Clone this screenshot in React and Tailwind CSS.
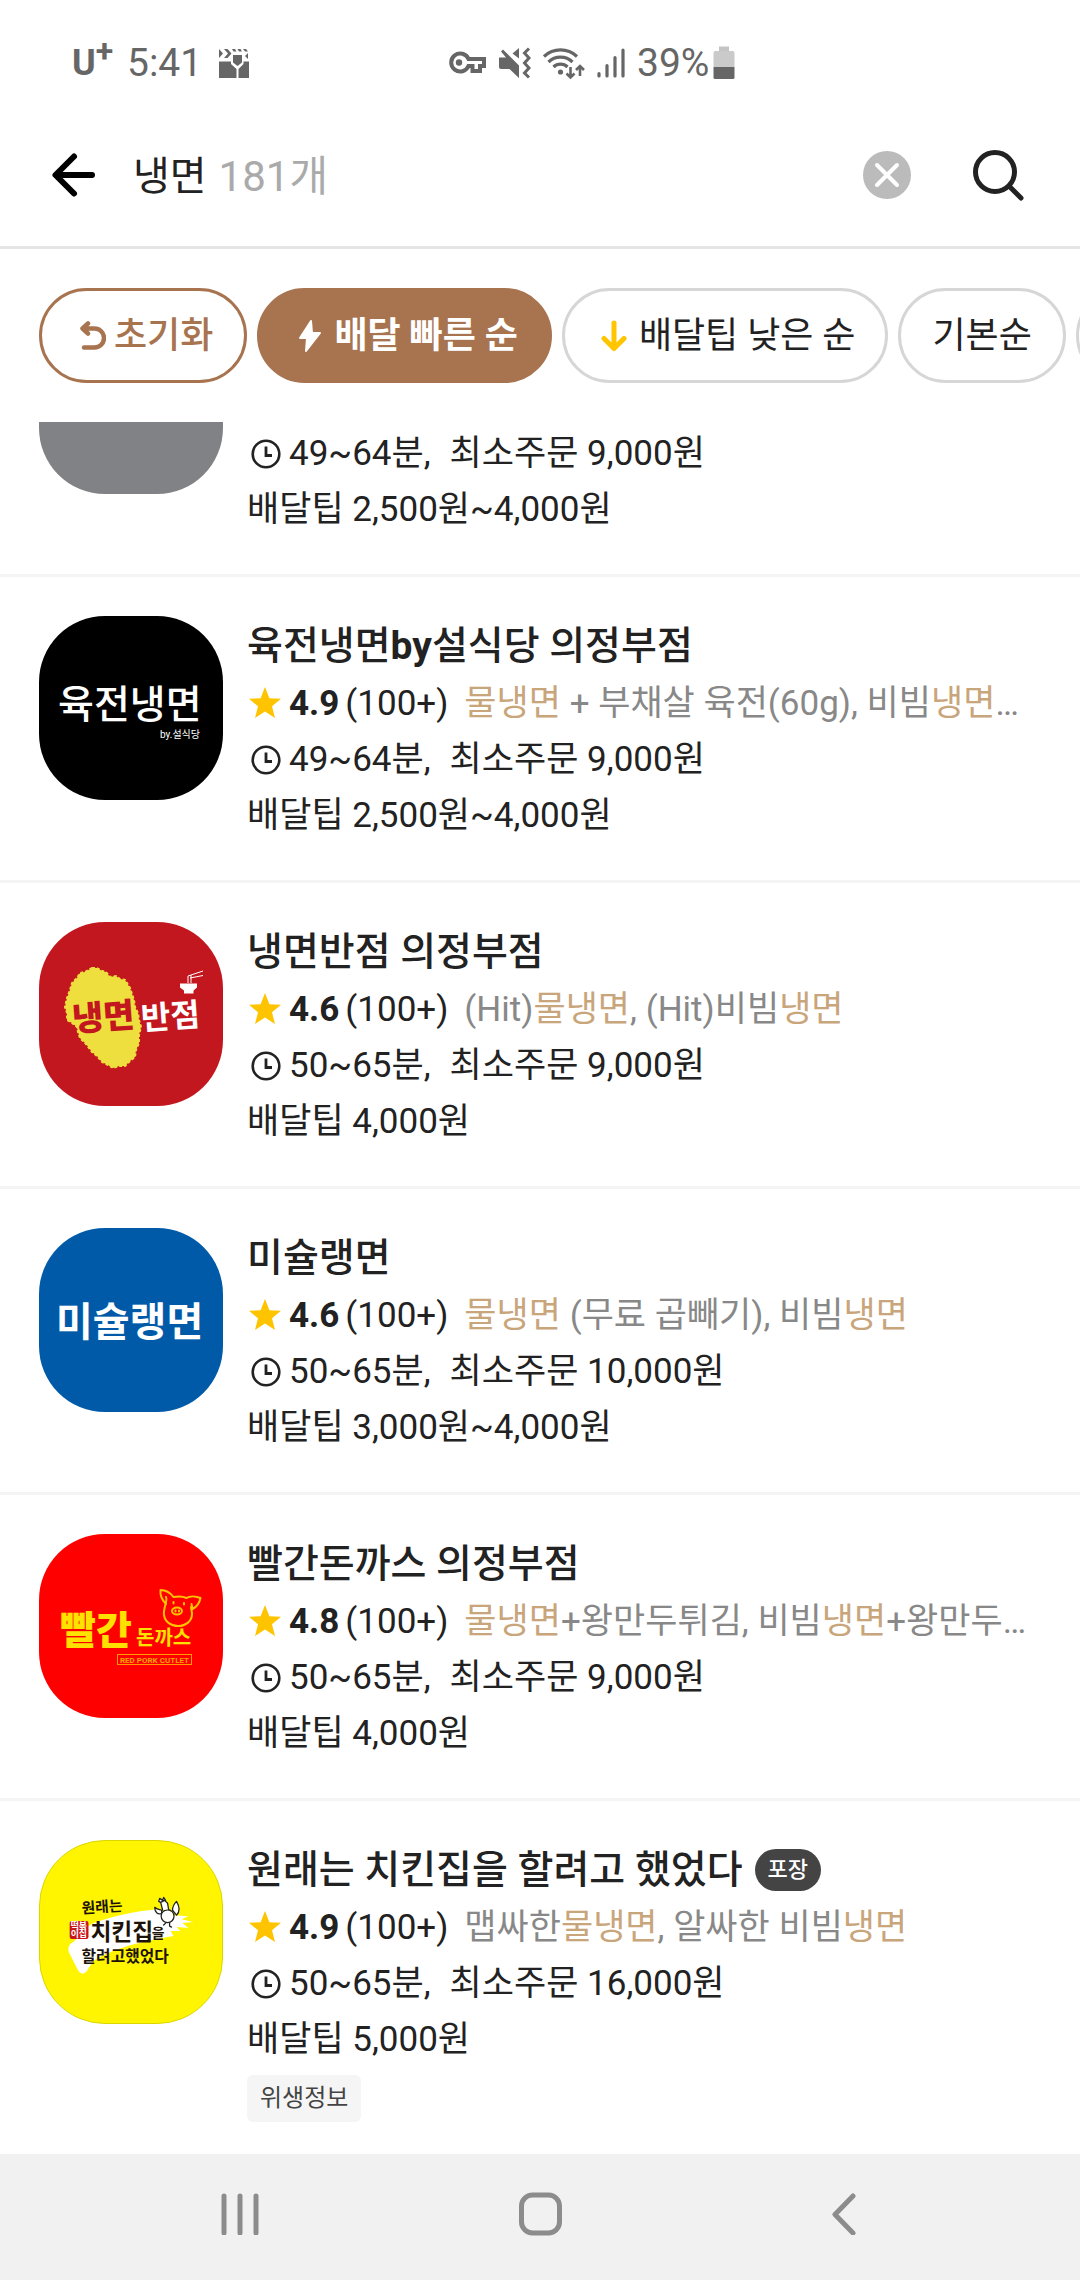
import React, { useState } from "react";

const KO = "font-['Roboto','Noto_Sans_CJK_KR',sans-serif]";

/* ---------- status bar icons ---------- */

function ClapperIcon() {
  return (
    <svg width="30" height="30" viewBox="0 0 30 30" fill="#666">
      <path d="M0 1l4 4.500L0 10zM5 1h3.500l4 4.500-4 4.500H5l4-4.500z" />
      <path d="M13 1h3l1.500 2.500h-3zM18.500 1h3L23 3.500h-3zM24 1h3l2 2.500h-3zM29 5v6l-3-3z" />
      <path d="M14 7h9v7.500L18.500 18 14 14.500z" />
      <path d="M0 13.500h12v2.500l5.500 5v9H0zM30 13.500h-5.500V16l-5 5v9H30z" />
    </svg>
  );
}

function KeyIcon() {
  return (
    <svg width="39" height="24" viewBox="0 0 39 24" fill="none" stroke="#666" strokeWidth="4">
      <path d="M20.500 8A9 9 0 1 0 20.500 15H24.500V20H32V15H36V8Z" strokeLinejoin="miter" />
      <circle cx="11" cy="11.500" r="3.200" fill="#666" stroke="none" />
    </svg>
  );
}

function MuteIcon() {
  return (
    <svg width="32" height="32" viewBox="0 0 32 32">
      <path d="M0 10.500h7L2 4.500l2-2L20 18.500V31l-9.500-9H2a2 2 0 0 1-2-2zM20 1v10.500L13.500 6.500z" fill="#666" />
      <path d="M30 1.500l-4.500 4.500L30 11l-4.500 5 4.500 5-4.500 5 4.500 4.500" fill="none" stroke="#666" strokeWidth="3" />
    </svg>
  );
}

function WifiIcon() {
  return (
    <svg width="42" height="33" viewBox="0 0 42 33" fill="none" stroke="#666" strokeWidth="3.200">
      <path d="M1 9.500a24 24 0 0 1 33 0M5.500 15a17 17 0 0 1 24 0M10.500 20a10 10 0 0 1 14 0" />
      <circle cx="17.500" cy="25" r="2.600" fill="#666" stroke="none" />
      <path d="M27.500 20v10M23.500 26.500l4 4 4-4M37 29V19.500M33 23l4-4 4 4" strokeWidth="2.600" />
    </svg>
  );
}

function SignalIcon() {
  return (
    <svg width="28" height="30" viewBox="0 0 28 30" stroke="#666" strokeWidth="3.200" strokeLinecap="round">
      <path d="M2 25.500v2.500M10 17.500V28M18 9.500V28M26 2v26" />
    </svg>
  );
}

function BatteryIcon() {
  return (
    <svg width="22" height="34" viewBox="0 0 22 34">
      <path d="M6 0.500h10V6H6z" fill="#c4c4c4" />
      <path d="M0.500 7a2 2 0 0 1 2-2h17a2 2 0 0 1 2 2v14h-21z" fill="#cacaca" />
      <path d="M0.500 21h21v10.500a1.500 1.500 0 0 1-1.500 1.500h-18a1.500 1.500 0 0 1-1.500-1.500z" fill="#666" />
    </svg>
  );
}

function StatusBar() {
  return (
    <div className="flex h-[104px] shrink-0 items-center pt-[22px] pl-[72px] text-[39px] leading-[44px] text-[#666]">
      <span className="flex w-[55px] items-start">
        <span className="text-[36px] leading-[48px] font-bold">U</span>
        <span className="text-[32px] leading-[24px] font-bold">+</span>
      </span>
      <span className="w-[92px]">5:41</span>
      <ClapperIcon />
      <div className="ml-[199px] flex items-center">
        <KeyIcon />
        <span className="ml-3"><MuteIcon /></span>
        <span className="ml-3"><WifiIcon /></span>
        <span className="ml-3"><SignalIcon /></span>
        <span className="ml-3">39%</span>
        <span className="ml-1"><BatteryIcon /></span>
      </div>
    </div>
  );
}

/* ---------- search header ---------- */

function SearchHeader() {
  const [query, setQuery] = useState("냉면");
  return (
    <header className="flex h-[145px] shrink-0 items-center border-b-[3px] border-[#e4e4e4] pr-[55px] pl-[51px]">
      <button type="button" aria-label="뒤로">
        <svg width="46" height="46" viewBox="0 0 46 46" fill="none" stroke="#000" strokeWidth="6" strokeLinecap="round" strokeLinejoin="round">
          <path d="M41 23H5M23 4.500L4.500 23 23 41.500" />
        </svg>
      </button>
      <label className="ml-9 flex flex-1 items-center pt-1 text-[40px] leading-[60px]">
        <input
          aria-label="검색어"
          value={query}
          onChange={(e) => setQuery(e.target.value)}
          className="h-[60px] [field-sizing:content] text-[#222] outline-none"
        />
        <span className="ml-3 text-[42px] text-[#aaa]">181개</span>
      </label>
      <button type="button" aria-label="지우기">
        <svg width="48" height="48" viewBox="0 0 48 48">
          <circle cx="24" cy="24" r="24" fill="#bbb" />
          <path d="M14 14l20 20M34 14L14 34" stroke="#fff" strokeWidth="4" strokeLinecap="round" />
        </svg>
      </button>
      <button type="button" aria-label="검색" className="ml-[60px]">
        <svg width="54" height="54" viewBox="0 0 54 54" fill="none" stroke="#222" strokeWidth="5" strokeLinecap="round">
          <circle cx="24" cy="24" r="19.500" />
          <path d="M38.500 38.500L50 50" />
        </svg>
      </button>
    </header>
  );
}

/* ---------- sort chips ---------- */

function SortChips() {
  const chip = "flex h-[95px] shrink-0 items-center rounded-full border-[3px] text-[36px] leading-[52px] whitespace-nowrap";
  return (
    <div className="flex shrink-0 gap-[10px] overflow-hidden pt-[39px] pb-[39px] pl-[39px]">
      <button type="button" className={chip + " border-[#a8744f] pr-[31px] pl-[38px] font-medium text-[#a8744f]"}>
        <svg width="26" height="30" viewBox="0 0 26 30" className="mr-2" fill="none" stroke="#a8744f" strokeWidth="4.500" strokeLinecap="round" strokeLinejoin="round">
          <path d="M8 2.500L2.500 7.500 8 12.500M3 7.500h11.500a9.500 9.500 0 0 1 0 19H4" />
        </svg>
        초기화
      </button>
      <button type="button" aria-pressed="true" className={chip + " border-[#a8744f] bg-[#a8744f] pr-[31px] pl-[38px] font-bold text-white"}>
        <svg width="24" height="34" viewBox="0 0 24 34" className="mr-3" fill="#fff" stroke="#fff" strokeWidth="2" strokeLinejoin="round">
          <path d="M13 2L2 19h7L8 32 22 14h-8z" />
        </svg>
        배달 빠른 순
      </button>
      <button type="button" className={chip + " border-[#d6d6d6] pr-[30px] pl-[36px] text-[#222]"}>
        <svg width="26" height="32" viewBox="0 0 26 32" className="mr-3" fill="none" stroke="#ffc600" strokeWidth="5" strokeLinecap="round" strokeLinejoin="round">
          <path d="M13 3v25M3 18.500L13 28.500 23 18.500" />
        </svg>
        배달팁 낮은 순
      </button>
      <button type="button" className={chip + " border-[#d6d6d6] px-[31px] text-[#222]"}>기본순</button>
      <button type="button" aria-label="더보기" className={chip + " w-[160px] border-[#d6d6d6]"} />
    </div>
  );
}

/* ---------- shop logos ---------- */

const logoBase = "size-[184px] shrink-0 rounded-[66px]";

function YukjeonLogo() {
  return (
    <svg viewBox="0 0 184 184" className={logoBase + " bg-black"} fill="#fff">
      <text x="19" y="102" fontSize="39" fontWeight="500">육전냉면</text>
      <text x="121" y="122" fontSize="10">by.설식당</text>
    </svg>
  );
}

function BanjeomLogo() {
  return (
    <svg viewBox="0 0 184 184" className={logoBase + " bg-[#c3171f]"}>
      <path
        d="M53 46L58 46 63 49 67 50 71 55 77 54 81 57 86 58 91 66 93 72 95 78 96 85 99 91 100 98 102 105 100 113 100 121 97 128 96 135 91 139 86 144 80 144 74 146 69 143 63 140 58 134 53 130 47 122 41 116 39 110 38 105 33 101 28 98 28 91 26 85 28 76 31 68 33 61 38 56 41 51 46 50z"
        fill="#efdf3e"
        stroke="#efdf3e"
        strokeWidth="2"
        strokeDasharray="3 2"
      />
      <text x="33" y="107" fontSize="34" fontWeight="900" fill="#c3171f" transform="rotate(-4 64 95)">냉면</text>
      <text x="102" y="106" fontSize="32" fontWeight="700" fill="#fff" transform="rotate(-4 130 95)">반점</text>
      <path d="M141 61.500h17v4l-3.500 3v3h-9.500v-3l-4-3z" fill="#fff" />
      <path d="M149 54v7M152 53v8M149 54l15-5M151 56l13-2.500" stroke="#fff" strokeWidth="1" fill="none" />
    </svg>
  );
}

function MichelinLogo() {
  return (
    <svg viewBox="0 0 184 184" className={logoBase + " bg-[#005aa8]"} fill="#fff">
      <text x="17" y="108" fontSize="40" fontWeight="700">미슐랭면</text>
    </svg>
  );
}

function RedPorkLogo() {
  return (
    <svg viewBox="0 0 184 184" className={logoBase + " bg-[#fe0000]"} fill="#ffe100">
      <text x="21" y="110" fontSize="39" fontWeight="900">빨간</text>
      <text x="97" y="111" fontSize="20" fontWeight="700">돈까스</text>
      <rect x="78.500" y="120.500" width="74" height="10" fill="none" stroke="#ff9a00" strokeWidth="1" />
      <text x="115.500" y="128.500" fontSize="8" fontWeight="700" textAnchor="middle" fill="#ffa200">RED PORK CUTLET</text>
      <g fill="none" stroke="#ffc400" strokeWidth="2" strokeLinecap="round" strokeLinejoin="round">
        <path d="M127 70c-4-4-6-9-5.500-14 6 0 10 3 13 7 5-1 9-1 13 1 3-2 9-2 14 0-1 5-4 9-8 11l-1-5" />
        <path d="M127 63c2 4-3 11-2 18 1 7 7 11 14 11 8 0 14-5 14-12 0-3-1-5-1-7" />
        <ellipse cx="138" cy="77" rx="5" ry="3.500" />
        <path d="M136.500 76.500v1M140 76.500v1M134.500 68v1.500M145 69v1.500" />
      </g>
    </svg>
  );
}

function ChickenLogo() {
  return (
    <svg viewBox="0 0 184 184" className={logoBase + " border border-[#dcd600] bg-[#fff500]"}>
      <path
        d="M52 84C72 76 96 71 118 69L134 75 150 76 143 79 155 82 144 83 150 88 138 87 142 91 132 91 135 96C112 100 78 106 54 121L47 132Q42 137 38 130L29 112C28 107 30 103 34 102 40 95 46 88 52 84z"
        fill="#fff"
      />
      <g fill="#1c1208">
        <text x="42" y="72" fontSize="15" fontWeight="700" transform="rotate(-4 62 66)">원래는</text>
        <text x="51" y="100" fontSize="23" fontWeight="700">치킨집</text>
        <text x="113" y="98" fontSize="14" fontWeight="700">을</text>
        <text x="42" y="122" fontSize="16" fontWeight="700">할려고했었다</text>
      </g>
      <rect x="30" y="81" width="19" height="18" rx="2" fill="#c8161d" />
      <g fill="#fff" fontSize="9" fontWeight="700">
        <text x="31" y="89">떡볶</text>
        <text x="31" y="97">이집</text>
      </g>
      <g fill="#fff" stroke="#222" strokeWidth="1.300" strokeLinejoin="round" strokeLinecap="round">
        <path d="M123 73c-4 2-7-1-7-6 2 2 4 2 7 3zM134 70c0-4 2-7 4-9 3 5 4 10 0 14z" />
        <circle cx="129" cy="76" r="6.500" />
        <path d="M124 70l-2-8 4-2 3 3 1 6M122 62l-2-1 1-3 3 2 1-3 2 3M127 83l-2 2M131 83v3l2 1" />
      </g>
    </svg>
  );
}

/* ---------- shop list ---------- */

function StarIcon() {
  return (
    <svg width="42" height="36" viewBox="0 0 42 36" fill="#ffc400" className="shrink-0">
      <path d="M18 1l4.400 11.200L34 12.800l-9 7.500L28 32l-10-6.600L8 32l3-11.700-9-7.500 11.600-.6z" />
    </svg>
  );
}

function ClockIcon() {
  return (
    <svg width="42" height="32" viewBox="0 0 42 32" fill="none" stroke="#222" strokeWidth="2.600" className="shrink-0">
      <circle cx="19" cy="16" r="13.300" />
      <path d="M19 8.500v9h6" strokeWidth="2.800" />
    </svg>
  );
}

/* Text between asterisks is the matched keyword. */
function Menu({ text }) {
  return (
    <span className="ml-4 whitespace-nowrap text-[#888]">
      {text.split("*").map((part, i) =>
        i % 2 ? <mark key={i} className="bg-transparent text-[#c9a57b]">{part}</mark> : part
      )}
    </span>
  );
}

/* Latin letters in a shop name are set bold beside the medium Hangul. */
function Name({ text }) {
  return (
    <span>
      {text.split(/([a-z]+)/).map((part, i) => (i % 2 ? <b key={i}>{part}</b> : part))}
    </span>
  );
}

function Delivery({ time, min, tip }) {
  return (
    <>
      <p className="flex items-center">
        <ClockIcon />
        {time}분,<span className="ml-[19px]">최소주문 {min}원</span>
      </p>
      <p>배달팁 {tip}</p>
    </>
  );
}

const shops = [
  { Logo: YukjeonLogo, name: "육전냉면by설식당 의정부점", score: "4.9", menu: "*물냉면* + 부채살 육전(60g), 비빔*냉면*…", time: "49~64", min: "9,000", tip: "2,500원~4,000원" },
  { Logo: BanjeomLogo, name: "냉면반점 의정부점", score: "4.6", menu: "(Hit)*물냉면*, (Hit)비빔*냉면*", time: "50~65", min: "9,000", tip: "4,000원" },
  { Logo: MichelinLogo, name: "미슐랭면", score: "4.6", menu: "*물냉면* (무료 곱빼기), 비빔*냉면*", time: "50~65", min: "10,000", tip: "3,000원~4,000원" },
  { Logo: RedPorkLogo, name: "빨간돈까스 의정부점", score: "4.8", menu: "*물냉면*+왕만두튀김, 비빔*냉면*+왕만두…", time: "50~65", min: "9,000", tip: "4,000원" },
  { Logo: ChickenLogo, name: "원래는 치킨집을 할려고 했었다", score: "4.9", menu: "맵싸한*물냉면*, 알싸한 비빔*냉면*", time: "50~65", min: "16,000", tip: "5,000원", pickup: true, hygiene: true },
];

function Shop({ Logo, name, score, menu, time, min, tip, pickup, hygiene }) {
  return (
    <li className="flex gap-6 border-b-[3px] border-[#f4f4f4] pt-[39px] pb-9 pl-[39px] last:border-b-0 last:pb-8">
      <Logo />
      <div className="min-w-0 flex-1 text-[35px] leading-[56px] text-[#222]">
        <h2 className="flex items-center text-[39px] leading-[60px] font-medium">
          <Name text={name} />
          {pickup && (
            <span className="ml-3 rounded-full bg-[#444] px-[13px] text-[22px] leading-[42px] font-medium text-white">포장</span>
          )}
        </h2>
        <p className="flex items-center">
          <StarIcon />
          <b className="mr-[6px]">{score}</b>(100+)
          <Menu text={menu} />
        </p>
        <Delivery time={time} min={min} tip={tip} />
        {hygiene && (
          <p className="mt-[7px] w-fit rounded-md bg-[#f5f5f5] px-[13px] text-[24px] leading-[47px] text-[#444]">위생정보</p>
        )}
      </div>
    </li>
  );
}

function NavBar() {
  return (
    <nav className="grid h-[126px] shrink-0 grid-cols-3 place-items-center bg-[#f1f1f1] px-[90px] pb-[6px]">
      <button type="button" aria-label="최근 앱">
        <svg width="42" height="42" viewBox="0 0 42 42" stroke="#8c8c8c" strokeWidth="5" strokeLinecap="round">
          <path d="M5 3v37M21 3v37M37 3v37" />
        </svg>
      </button>
      <button type="button" aria-label="홈">
        <svg width="44" height="44" viewBox="0 0 44 44" fill="none" stroke="#8c8c8c" strokeWidth="5">
          <rect x="3.500" y="3" width="38" height="38" rx="11" />
        </svg>
      </button>
      <button type="button" aria-label="뒤로 가기">
        <svg width="32" height="42" viewBox="0 0 32 42" fill="none" stroke="#8c8c8c" strokeWidth="5" strokeLinecap="round" strokeLinejoin="round">
          <path d="M29 3L11 21.500 29 40" />
        </svg>
      </button>
    </nav>
  );
}

export default function App() {
  return (
    <div className={"flex min-h-screen flex-col bg-white " + KO}>
      <StatusBar />
      <SearchHeader />
      <SortChips />
      <main className="flex-1 overflow-hidden">
        <ul>
          <li className="flex gap-6 border-b-[3px] border-[#f4f4f4] pb-9 pl-[39px]">
            <div className="h-[72px] w-[184px] shrink-0 rounded-b-[66px] bg-[#818286]" />
            <div className="pt-1 text-[35px] leading-[56px] text-[#222]">
              <Delivery time="49~64" min="9,000" tip="2,500원~4,000원" />
            </div>
          </li>
          {shops.map((shop) => (
            <Shop key={shop.name} {...shop} />
          ))}
        </ul>
      </main>
      <NavBar />
    </div>
  );
}
